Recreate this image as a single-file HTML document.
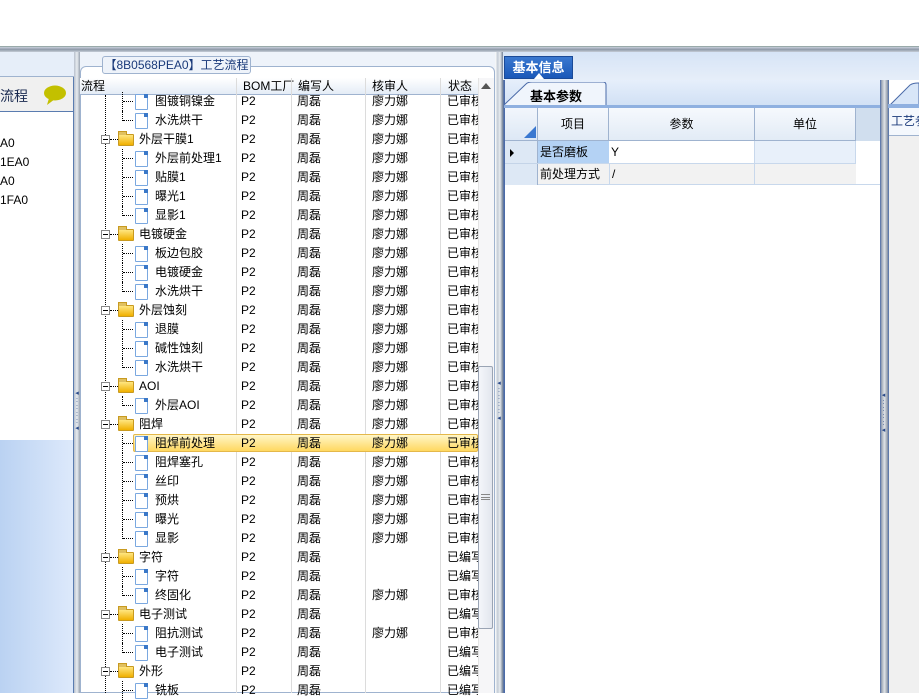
<!DOCTYPE html>
<html><head><meta charset="utf-8">
<style>
*{margin:0;padding:0;box-sizing:border-box}
body{width:919px;height:693px;overflow:hidden;background:#fff;position:relative;font:12px "Liberation Sans","WenQuanYi Zen Hei","Noto Sans CJK SC",sans-serif;color:#000}
.a{position:absolute}
.r{position:absolute;left:80px;width:398px;height:19px}
.r span{position:absolute;top:2px;white-space:nowrap;line-height:15px}
.b{left:161px}.w{left:217px}.h{left:292px}.s{left:367px;width:31px;overflow:hidden}
.tg{position:absolute;left:21px;top:5px;width:9px;height:9px;border:1px solid #888;background:#fff}
.tg:after{content:"";position:absolute;left:1px;top:3px;width:5px;height:1px;background:#000}
.hl{position:absolute;left:30px;top:9px;width:8px;border-top:1px dotted #000}
.fd{position:absolute;left:38px;top:4px;width:16px;height:12px;background:linear-gradient(#ffe680,#f0b000);border:1px solid #c89a20;border-radius:1px}
.fd:before{content:"";position:absolute;left:-1px;top:-4px;width:7px;height:3px;background:#e0c060;border:1px solid #c89a20;border-bottom:none}
.cv{position:absolute;left:42px;top:0;height:19px;border-left:1px dotted #000}
.cl{position:absolute;left:42px;top:0;height:10px;border-left:1px dotted #000}
.ch{position:absolute;left:43px;top:9px;width:10px;border-top:1px dotted #000}
.dc{position:absolute;left:55px;top:2px;width:13px;height:16px;background:#fff;border:1px solid #7aa8e0;border-radius:1px}
.dc:after{content:"";position:absolute;right:-1px;top:-1px;width:4px;height:4px;background:#3a78c8}
.ft{left:59px}.ct{left:75px}
.vl{position:absolute;top:78px;height:615px;border-left:1px solid #dcdcdc}
.hd{position:absolute;top:78px;line-height:17px}
</style></head><body>
<div class="a" style="left:0;top:46px;width:919px;height:6px;background:linear-gradient(#c8d0dc,#8f99a8 50%,#c4ccd6);border-top:1px solid #9aa"></div>
<div class="a" style="left:0;top:52px;width:74px;height:25px;background:#e6eef9;border-bottom:1px solid #9fb3cf"></div>
<div class="a" style="left:0;top:77px;width:74px;height:363px;background:#fff;border-right:1px solid #5a7cb0"></div>
<div class="a" style="left:0;top:77px;width:73px;height:35px;background:#f0f0f0;border-bottom:1px solid #5a7cb0"></div>
<div class="a" style="left:0;top:86px;font-size:14px;color:#1a2a50">流程</div>
<svg class="a" style="left:42px;top:84px" width="26" height="22"><ellipse cx="13" cy="9" rx="11" ry="7.5" fill="#c3c000"/><path d="M7 14 L5 21 L13 15z" fill="#c3c000"/></svg>
<div class="a" style="left:0;top:134px;line-height:19px">A0<br>1EA0<br>A0<br>1FA0</div>
<div class="a" style="left:0;top:440px;width:74px;height:253px;background:linear-gradient(90deg,#bad2f2,#dde9fb);border-right:1px solid #5a7cb0"></div>
<div class="a" style="left:74px;top:52px;width:6px;height:641px;background:linear-gradient(90deg,#b8c0cc,#e8ecf0,#9aa4b2)"></div>
<div class="a" style="left:74px;top:390px;width:6px;color:#2a4a8a;font-size:7px;line-height:7px;text-align:center">◂<br>:<br>:<br>:<br>:<br>◂</div>
<div class="a" style="left:80px;top:52px;width:417px;height:26px;background:#eef3fa"></div>
<div class="a" style="left:80px;top:66px;width:415px;height:627px;border:1px solid #9fb3cf;border-radius:6px 6px 0 0;background:#fff"></div>
<div class="a" style="left:102px;top:56px;width:149px;height:18px;background:#eef3fa;border:1px solid #9fb3cf;border-radius:3px;color:#1a3a7a;font-size:12px;text-align:center;line-height:16px">【8B0568PEA0】工艺流程</div>
<div class="a" style="left:80px;top:78px;width:398px;height:17px;background:linear-gradient(#fff,#e4ecf6);border-bottom:1px solid #9fb3cf"></div>
<div class="hd" style="left:81px">流程</div>
<div class="hd" style="left:243px">BOM工厂</div>
<div class="hd" style="left:298px">编写人</div>
<div class="hd" style="left:372px">核审人</div>
<div class="hd" style="left:448px">状态</div>
<div class="vl" style="left:236px"></div><div class="vl" style="left:291px"></div><div class="vl" style="left:365px"></div><div class="vl" style="left:440px"></div>
<div class="a" style="left:105px;top:95px;height:598px;border-left:1px dotted #000"></div>
<div class="a" style="left:133px;top:434px;width:345px;height:18px;background:linear-gradient(#fff6c8,#ffd860);border:1px solid #e4b84a;border-radius:2px"></div>

<div class="r" style="top:92px"><i class="cv"></i><i class="ch"></i><i class="dc"></i><span class="ct">图镀铜镍金</span><span class="b">P2</span><span class="w">周磊</span><span class="h">廖力娜</span><span class="s">已审核</span></div>
<div class="r" style="top:111px"><i class="cl"></i><i class="ch"></i><i class="dc"></i><span class="ct">水洗烘干</span><span class="b">P2</span><span class="w">周磊</span><span class="h">廖力娜</span><span class="s">已审核</span></div>
<div class="r" style="top:130px"><i class="tg"></i><i class="hl"></i><i class="fd"></i><span class="ft">外层干膜1</span><span class="b">P2</span><span class="w">周磊</span><span class="h">廖力娜</span><span class="s">已审核</span></div>
<div class="r" style="top:149px"><i class="cv"></i><i class="ch"></i><i class="dc"></i><span class="ct">外层前处理1</span><span class="b">P2</span><span class="w">周磊</span><span class="h">廖力娜</span><span class="s">已审核</span></div>
<div class="r" style="top:168px"><i class="cv"></i><i class="ch"></i><i class="dc"></i><span class="ct">贴膜1</span><span class="b">P2</span><span class="w">周磊</span><span class="h">廖力娜</span><span class="s">已审核</span></div>
<div class="r" style="top:187px"><i class="cv"></i><i class="ch"></i><i class="dc"></i><span class="ct">曝光1</span><span class="b">P2</span><span class="w">周磊</span><span class="h">廖力娜</span><span class="s">已审核</span></div>
<div class="r" style="top:206px"><i class="cl"></i><i class="ch"></i><i class="dc"></i><span class="ct">显影1</span><span class="b">P2</span><span class="w">周磊</span><span class="h">廖力娜</span><span class="s">已审核</span></div>
<div class="r" style="top:225px"><i class="tg"></i><i class="hl"></i><i class="fd"></i><span class="ft">电镀硬金</span><span class="b">P2</span><span class="w">周磊</span><span class="h">廖力娜</span><span class="s">已审核</span></div>
<div class="r" style="top:244px"><i class="cv"></i><i class="ch"></i><i class="dc"></i><span class="ct">板边包胶</span><span class="b">P2</span><span class="w">周磊</span><span class="h">廖力娜</span><span class="s">已审核</span></div>
<div class="r" style="top:263px"><i class="cv"></i><i class="ch"></i><i class="dc"></i><span class="ct">电镀硬金</span><span class="b">P2</span><span class="w">周磊</span><span class="h">廖力娜</span><span class="s">已审核</span></div>
<div class="r" style="top:282px"><i class="cl"></i><i class="ch"></i><i class="dc"></i><span class="ct">水洗烘干</span><span class="b">P2</span><span class="w">周磊</span><span class="h">廖力娜</span><span class="s">已审核</span></div>
<div class="r" style="top:301px"><i class="tg"></i><i class="hl"></i><i class="fd"></i><span class="ft">外层蚀刻</span><span class="b">P2</span><span class="w">周磊</span><span class="h">廖力娜</span><span class="s">已审核</span></div>
<div class="r" style="top:320px"><i class="cv"></i><i class="ch"></i><i class="dc"></i><span class="ct">退膜</span><span class="b">P2</span><span class="w">周磊</span><span class="h">廖力娜</span><span class="s">已审核</span></div>
<div class="r" style="top:339px"><i class="cv"></i><i class="ch"></i><i class="dc"></i><span class="ct">碱性蚀刻</span><span class="b">P2</span><span class="w">周磊</span><span class="h">廖力娜</span><span class="s">已审核</span></div>
<div class="r" style="top:358px"><i class="cl"></i><i class="ch"></i><i class="dc"></i><span class="ct">水洗烘干</span><span class="b">P2</span><span class="w">周磊</span><span class="h">廖力娜</span><span class="s">已审核</span></div>
<div class="r" style="top:377px"><i class="tg"></i><i class="hl"></i><i class="fd"></i><span class="ft">AOI</span><span class="b">P2</span><span class="w">周磊</span><span class="h">廖力娜</span><span class="s">已审核</span></div>
<div class="r" style="top:396px"><i class="cl"></i><i class="ch"></i><i class="dc"></i><span class="ct">外层AOI</span><span class="b">P2</span><span class="w">周磊</span><span class="h">廖力娜</span><span class="s">已审核</span></div>
<div class="r" style="top:415px"><i class="tg"></i><i class="hl"></i><i class="fd"></i><span class="ft">阻焊</span><span class="b">P2</span><span class="w">周磊</span><span class="h">廖力娜</span><span class="s">已审核</span></div>
<div class="r" style="top:434px"><i class="cv"></i><i class="ch"></i><i class="dc"></i><span class="ct">阻焊前处理</span><span class="b">P2</span><span class="w">周磊</span><span class="h">廖力娜</span><span class="s">已审核</span></div>
<div class="r" style="top:453px"><i class="cv"></i><i class="ch"></i><i class="dc"></i><span class="ct">阻焊塞孔</span><span class="b">P2</span><span class="w">周磊</span><span class="h">廖力娜</span><span class="s">已审核</span></div>
<div class="r" style="top:472px"><i class="cv"></i><i class="ch"></i><i class="dc"></i><span class="ct">丝印</span><span class="b">P2</span><span class="w">周磊</span><span class="h">廖力娜</span><span class="s">已审核</span></div>
<div class="r" style="top:491px"><i class="cv"></i><i class="ch"></i><i class="dc"></i><span class="ct">预烘</span><span class="b">P2</span><span class="w">周磊</span><span class="h">廖力娜</span><span class="s">已审核</span></div>
<div class="r" style="top:510px"><i class="cv"></i><i class="ch"></i><i class="dc"></i><span class="ct">曝光</span><span class="b">P2</span><span class="w">周磊</span><span class="h">廖力娜</span><span class="s">已审核</span></div>
<div class="r" style="top:529px"><i class="cl"></i><i class="ch"></i><i class="dc"></i><span class="ct">显影</span><span class="b">P2</span><span class="w">周磊</span><span class="h">廖力娜</span><span class="s">已审核</span></div>
<div class="r" style="top:548px"><i class="tg"></i><i class="hl"></i><i class="fd"></i><span class="ft">字符</span><span class="b">P2</span><span class="w">周磊</span><span class="s">已编写</span></div>
<div class="r" style="top:567px"><i class="cv"></i><i class="ch"></i><i class="dc"></i><span class="ct">字符</span><span class="b">P2</span><span class="w">周磊</span><span class="s">已编写</span></div>
<div class="r" style="top:586px"><i class="cl"></i><i class="ch"></i><i class="dc"></i><span class="ct">终固化</span><span class="b">P2</span><span class="w">周磊</span><span class="h">廖力娜</span><span class="s">已审核</span></div>
<div class="r" style="top:605px"><i class="tg"></i><i class="hl"></i><i class="fd"></i><span class="ft">电子测试</span><span class="b">P2</span><span class="w">周磊</span><span class="s">已编写</span></div>
<div class="r" style="top:624px"><i class="cv"></i><i class="ch"></i><i class="dc"></i><span class="ct">阻抗测试</span><span class="b">P2</span><span class="w">周磊</span><span class="h">廖力娜</span><span class="s">已审核</span></div>
<div class="r" style="top:643px"><i class="cl"></i><i class="ch"></i><i class="dc"></i><span class="ct">电子测试</span><span class="b">P2</span><span class="w">周磊</span><span class="s">已编写</span></div>
<div class="r" style="top:662px"><i class="tg"></i><i class="hl"></i><i class="fd"></i><span class="ft">外形</span><span class="b">P2</span><span class="w">周磊</span><span class="s">已编写</span></div>
<div class="r" style="top:681px"><i class="cv"></i><i class="ch"></i><i class="dc"></i><span class="ct">铣板</span><span class="b">P2</span><span class="w">周磊</span><span class="s">已编写</span></div>
<div class="a" style="left:478px;top:78px;width:16px;height:615px;background:#f6f6f8;border-left:1px solid #e4e4e4"></div>
<div class="a" style="left:481px;top:83px;width:0;height:0;border-left:5px solid transparent;border-right:5px solid transparent;border-bottom:6px solid #555"></div>
<div class="a" style="left:478px;top:366px;width:15px;height:263px;background:linear-gradient(90deg,#f4f6fa,#e2e6ee);border:1px solid #9aa4b4;border-radius:2px"></div>
<div class="a" style="left:481px;top:494px;width:9px;height:6px;border-top:1px solid #888;border-bottom:1px solid #888"><div style="margin-top:2px;border-top:1px solid #888"></div></div>
<div class="a" style="left:495px;top:52px;width:9px;height:641px;background:linear-gradient(90deg,#fff,#c4ccd6 30%,#e8ecf0 55%,#7f8c9e 85%,#4a6aa8)"></div>
<div class="a" style="left:496px;top:380px;width:6px;color:#2a4a8a;font-size:7px;line-height:7px;text-align:center">◂<br>:<br>:<br>:<br>:<br>◂</div>
<div class="a" style="left:503px;top:52px;width:416px;height:28px;background:linear-gradient(#d6e4f6,#e6eef9)"></div>
<div class="a" style="left:504px;top:56px;width:69px;height:23px;background:linear-gradient(#3a78d0,#1a58b8);color:#fff;font-weight:bold;font-size:13px;line-height:22px;text-align:center;border:1px solid #1a4a98">基本信息</div>
<div class="a" style="left:534px;top:73px;width:0;height:0;border-left:5px solid transparent;border-right:5px solid transparent;border-bottom:6px solid #fff"></div>
<div class="a" style="left:504px;top:80px;width:380px;height:28px;background:linear-gradient(#e6effb,#cfdff4);border-left:1px solid #4a6aa8;border-right:1px solid #4a6aa8"></div>
<div class="a" style="left:504px;top:105px;width:380px;height:3px;background:#8fb0e0"></div>
<svg class="a" style="left:504px;top:82px" width="104" height="24"><path d="M0 23 L22 2 Q24 0 28 0 L99 0 Q102 0 102 3 L102 23" fill="#f0f5fc" stroke="#4a6aa8"/></svg>
<div class="a" style="left:530px;top:86px;font-weight:bold;font-size:13px">基本参数</div>
<div class="a" style="left:504px;top:108px;width:380px;height:585px;background:#fff;border-left:1px solid #4a6aa8;border-right:1px solid #4a6aa8"></div>
<div class="a" style="left:505px;top:108px;width:375px;height:33px;background:#d0deee"></div>
<div class="a" style="left:505px;top:108px;width:33px;height:33px;background:linear-gradient(#f2f6fc,#dde8f5);border-right:1px solid #9fb3cf;border-bottom:1px solid #9fb3cf"></div>
<div class="a" style="left:524px;top:126px;width:0;height:0;border-left:12px solid transparent;border-bottom:12px solid #3a78d0"></div>
<div class="a" style="left:538px;top:108px;width:71px;height:33px;background:linear-gradient(#f6f9fd,#e2ebf6);border-right:1px solid #9fb3cf;border-bottom:1px solid #9fb3cf;text-align:center;line-height:33px">项目</div>
<div class="a" style="left:609px;top:108px;width:146px;height:33px;background:linear-gradient(#f6f9fd,#e2ebf6);border-right:1px solid #9fb3cf;border-bottom:1px solid #9fb3cf;text-align:center;line-height:33px">参数</div>
<div class="a" style="left:755px;top:108px;width:101px;height:33px;background:linear-gradient(#f6f9fd,#e2ebf6);border-right:1px solid #9fb3cf;border-bottom:1px solid #9fb3cf;text-align:center;line-height:33px">单位</div>
<div class="a" style="left:505px;top:141px;width:33px;height:44px;background:#dde8f5;border-right:1px solid #9fb3cf"></div>
<div class="a" style="left:505px;top:163px;width:33px;border-top:1px solid #c4d4e8"></div>
<div class="a" style="left:510px;top:149px;width:0;height:0;border-top:4px solid transparent;border-bottom:4px solid transparent;border-left:4px solid #000"></div>
<div class="a" style="left:538px;top:141px;width:71px;height:22px;background:#b4d2f4;line-height:22px;padding-left:2px">是否磨板</div>
<div class="a" style="left:609px;top:141px;width:146px;height:22px;border-right:1px solid #c8d8ec;line-height:22px;padding-left:2px">Y</div>
<div class="a" style="left:755px;top:141px;width:101px;height:22px;background:#e8f0fa;border-right:1px solid #c8d8ec"></div>
<div class="a" style="left:538px;top:163px;width:318px;height:22px;background:#f2f2f2;border-top:1px solid #c8d8ec;border-bottom:1px solid #c8d8ec"></div>
<div class="a" style="left:538px;top:164px;line-height:20px;padding-left:2px">前处理方式</div>
<div class="a" style="left:609px;top:163px;width:146px;height:22px;border-left:1px solid #c8d8ec;border-right:1px solid #c8d8ec;line-height:22px;padding-left:2px">/</div>
<div class="a" style="left:855px;top:141px;width:25px;height:44px;border-bottom:1px solid #c8d8ec"></div>
<div class="a" style="left:880px;top:80px;width:9px;height:613px;background:linear-gradient(90deg,#4a6aa8,#a4acb8 20%,#dfe3e8 50%,#9aa2ae 80%,#4a6aa8)"></div>
<div class="a" style="left:880px;top:392px;width:7px;color:#2a4a8a;font-size:7px;line-height:7px;text-align:center">◂<br>:<br>:<br>:<br>:<br>◂</div>
<svg class="a" style="left:888px;top:80px" width="31" height="28"><path d="M0 27 L22 5 Q25 3 30 3 L31 3 L31 27z" fill="#d8e6f8" stroke="#4a6aa8"/></svg>
<div class="a" style="left:888px;top:104px;width:31px;height:4px;background:#8fb0e0"></div>
<div class="a" style="left:889px;top:108px;width:30px;height:28px;background:#f4f8fd;border-bottom:1px solid #9fb3cf;color:#1a3a7a;line-height:26px;padding-left:2px;white-space:nowrap;overflow:hidden">工艺参</div>
<div class="a" style="left:889px;top:136px;width:30px;height:557px;background:#f0f0f0"></div>
</body></html>
